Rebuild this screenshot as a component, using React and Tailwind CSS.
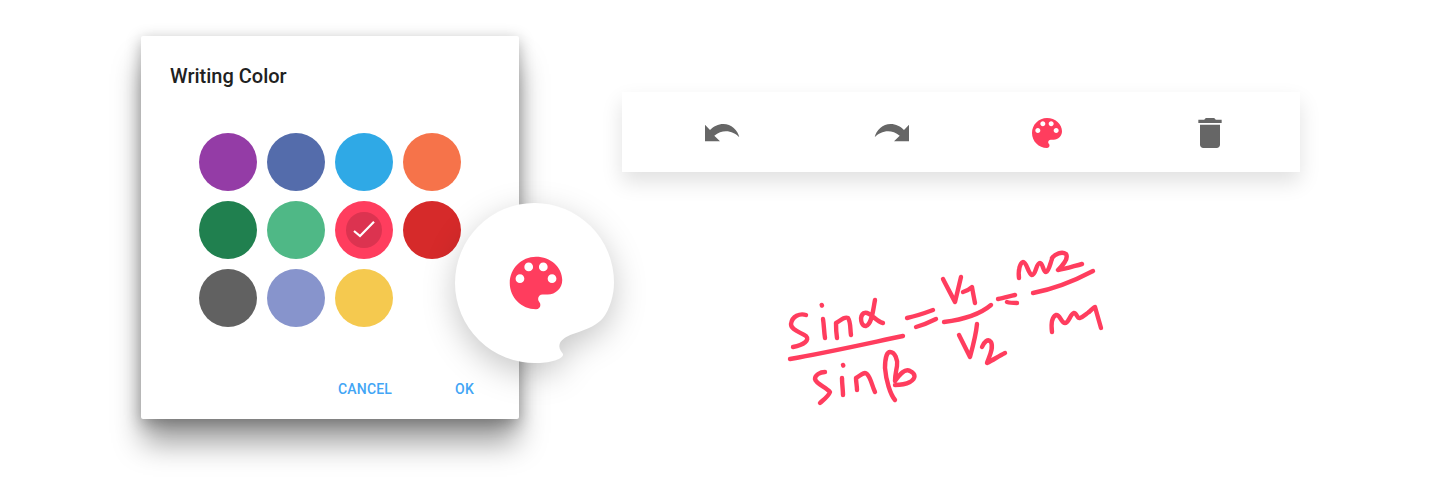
import React from 'react';

const swatches = [
  'bg-[#943ca6]', 'bg-[#546cab]', 'bg-[#2fa9e6]', 'bg-[#f6734a]',
  'bg-[#20804f]', 'bg-[#4fb886]', 'bg-[#ff3d5e]', 'bg-[#d62a2a]',
  'bg-[#616161]', 'bg-[#8794cc]', 'bg-[#f5c94f]'
];

const palettePath = 'M12 3c-4.97 0-9 4.03-9 9s4.03 9 9 9c.83 0 1.5-.67 1.5-1.5 0-.39-.15-.74-.39-1.01-.24-.27-.39-.62-.39-1.01 0-.83.67-1.5 1.5-1.5H16c2.76 0 5-2.24 5-5 0-4.42-4.03-8-9-8zm-5.5 9c-.83 0-1.5-.67-1.5-1.5S5.67 9 6.5 9 8 9.67 8 10.5 7.33 12 6.5 12zm3-4C8.67 8 8 7.33 8 6.5S8.67 5 9.5 5s1.5.67 1.5 1.5S10.33 8 9.5 8zm5 0c-.83 0-1.5-.67-1.5-1.5S13.67 5 14.5 5s1.5.67 1.5 1.5S15.33 8 14.5 8zm3 4c-.83 0-1.5-.67-1.5-1.5S16.67 9 17.5 9s1.5.67 1.5 1.5-.67 1.5-1.5 1.5z';

const undoPath = 'M5 3.7V20.3H20L14.3 14.7C18 11.5 22 10.2 26 10.2C31 10.2 36 12.5 39.3 16.3C38 9 31 3 23.5 3C18 3 13.5 5.5 10 9Z';

// handwriting strokes, one path per pen stroke
const strokes = [
  'M26 65C20 63 12 66 11 74C11 80 20 82 26 86C30 90 24 95 13 97',
  'M43 69C44 75 44 82 45 88',
  'M41.7 55L42 55.5',
  'M57 88C56 82 56 77 56 73C60 71 64 66 68 68C71 72 70 80 71 85',
  'M95 50C93 60 92 74 86 76C81 77 79 66 84 63C90 61 95 71 103 73',
  'M10 109C45 103 85 94 123 86',
  'M45 122C40 122 35 125 35 129C36 134 46 137 50 142C48 147 43 150 40 153',
  'M62 128C62 134 63 140 63 145',
  'M63 115L63.3 115.5',
  'M77 140C77 136 76 132 76 128C80 126 84 121 87 124C91 128 92 136 95 142',
  'M115 150C110 144 106 130 105 118C105 108 107 102 110 102C115 102 118 110 117 116C116 122 115 125 115 131C120 124 125 118 130 121C136 124 136 128 130 132C126 134 120 135 115 135',
  'M127 68C136 66 145 63 153 60',
  'M136 77C143 75 150 72 156 69',
  'M163 29C167 37 172 46 175 52C177 44 179 35 181 27',
  'M183 42C186 41 190 39 192 37C193 43 194 48 195 53',
  'M164 72C180 70 198 66 211 55',
  'M179 85C183 93 187 101 190 107C193 96 196 85 197 74',
  'M202 97C204 92 208 88 211 92C214 98 209 107 207 113C213 110 219 106 225 103',
  'M218 49C224 48 230 46 235 45',
  'M227 52C230 53 234 53 237 53',
  'M239 28C238 20 240 13 243 12C247 12 248 24 252 25C256 25 256 13 260 13C263 13 263 22 266 22C269 21 270 14 272 9',
  'M272 8C275 4 282 1 286 4C289 9 282 16 278 20C286 19 294 16 302 14',
  'M253 43C274 39 294 31 313 21',
  'M272 82C271 74 272 67 276 65C280 64 281 73 285 73C289 73 290 64 294 63C297 63 297 69 300 68C303 67 306 64 309 62',
  'M309 62C311 60 313 58 315 57C317 64 319 71 321 78'
];

const Palette = ({ className }) => (
  <svg viewBox="0 0 24 24" className={className}>
    <path d={palettePath} fill="#ff3d5e" />
  </svg>
);

const App = () => {
  return (
    <div className="flex h-[480px] w-[1440px] items-start overflow-hidden bg-white pl-[141px] pt-[36px] font-['Roboto',sans-serif]">
      <div className="relative flex h-[383px] w-[378px] shrink-0 flex-col rounded-[2px] bg-white shadow-[0_26px_28px_-2px_rgba(0,0,0,0.38),0_4px_16px_rgba(0,0,0,0.3)]">
        <h2 className="pl-[29px] pt-[28px] text-[20px] font-medium leading-6 text-[#212121]">Writing Color</h2>

        <div className="ml-[58px] mt-[45px] grid w-[262px] grid-cols-4 gap-[10px]">
          {swatches.map((color, i) => (
            <div key={color} className={`flex h-[58px] w-[58px] items-center justify-center rounded-full ${color}`}>
              {i === 6 && (
                <div className="h-9 w-9 rounded-full bg-[#dc3350]">
                  <svg viewBox="0 0 36 36" className="h-9 w-9">
                    <path d="M8 19L14 24L28 9.7" fill="none" stroke="#fff" strokeWidth="2.2" />
                  </svg>
                </div>
              )}
            </div>
          ))}
        </div>

        <div className="mt-auto flex justify-end gap-[63px] pb-5 pr-[45px] text-[14px] font-medium leading-5 tracking-[0.2px] text-[#42a5f5]">
          <span>CANCEL</span>
          <span>OK</span>
        </div>

        <div className="absolute left-[314px] top-[167px] h-[160px] w-[159px]">
          <svg viewBox="0 0 159 160" className="h-[160px] w-[159px] overflow-visible drop-shadow-[0_10px_16px_rgba(0,0,0,0.22)]">
            <path
              d="M79.5 0A79.5 79.5 0 0 1 159 79.5C159 92 155 106 148 115C142 122 135 125 118 131C112 133 107 136 105 140C103 145 106 148 108 151C109 155 98 160 82 160A80 80 0 0 1 0 80A79.5 80 0 0 1 79.5 0Z"
              fill="#fff"
            />
          </svg>
          <Palette className="absolute left-[46px] top-[45px] h-[70px] w-[70px]" />
        </div>
      </div>

      <div className="ml-[103px] flex w-[678px] shrink-0 flex-col pt-[56px]">
        <div className="flex h-20 items-center bg-white pl-[78px] pt-[2px] shadow-[0_10px_20px_rgba(0,0,0,0.12)]">
          <svg viewBox="0 0 40 24" className="h-6 w-10">
            <path d={undoPath} fill="#666" />
          </svg>
          <svg viewBox="0 0 40 24" className="ml-[134px] h-6 w-10 -scale-x-100">
            <path d={undoPath} fill="#666" />
          </svg>
          <Palette className="ml-[113px] h-10 w-10" />
          <svg viewBox="0 0 24 24" className="ml-[123px] h-10 w-10">
            <path d="M6 19c0 1.1.9 2 2 2h8c1.1 0 2-.9 2-2V7H6v12zM19 4h-3.5l-1-1h-5l-1 1H5v2h14V4z" fill="#666" />
          </svg>
        </div>

        <svg viewBox="0 0 330 170" className="ml-[158px] mt-[78px] h-[170px] w-[330px]">
          {strokes.map((d) => (
            <path key={d} d={d} fill="none" stroke="#ff3d5e" strokeWidth="4.4" strokeLinecap="round" strokeLinejoin="round" />
          ))}
        </svg>
      </div>
    </div>
  );
};

export default App;
